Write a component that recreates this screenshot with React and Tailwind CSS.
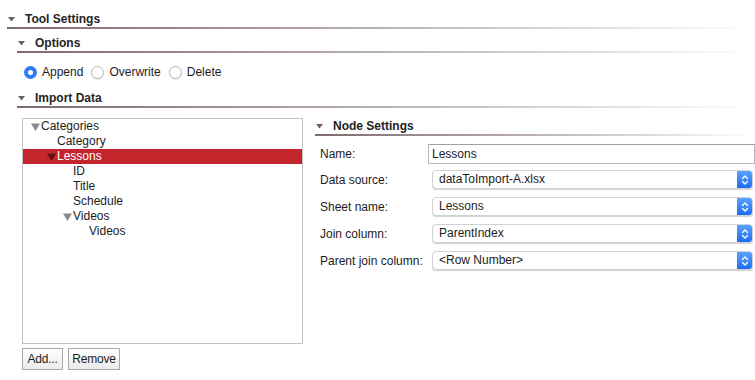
import React from "react";

const Caret = ({ className = "" }) => (
  <svg width="7" height="5" viewBox="0 0 7 5" className={className}>
    <path d="M0 0 L7 0 L3.5 4.5 Z" fill="currentColor" />
  </svg>
);

const TreeCaret = ({ selected }) => (
  <svg width="9" height="8" viewBox="0 0 9 8" className="shrink-0">
    <path d="M0 0.5 L9 0.5 L4.5 8 Z" fill={selected ? "#5c1114" : "#8a8a8a"} />
  </svg>
);

const SectionHeader = ({ title, indent, className = "" }) => (
  <div className={className}>
    <div className="flex items-center h-[15px]" style={{ paddingLeft: indent }}>
      <Caret className="text-[#6f5f5f]" />
      <span className="ml-[10px] font-bold text-[#242424]">{title}</span>
    </div>
    <div
      className="h-[2px] bg-gradient-to-r from-[#7d6b6b] to-white"
      style={{ marginLeft: indent - 1 }}
    />
  </div>
);

const Radio = ({ checked, label }) => (
  <label className="flex items-center gap-[5px]">
    {checked ? (
      <span className="w-[13px] h-[13px] rounded-full bg-[#2f7df6] flex items-center justify-center">
        <span className="w-[5px] h-[5px] rounded-full bg-white" />
      </span>
    ) : (
      <span className="w-[13px] h-[13px] rounded-full bg-white border border-[#b4b4b4] shadow-[0_1px_1px_rgba(0,0,0,0.08)]" />
    )}
    <span>{label}</span>
  </label>
);

const tree = [
  { label: "Categories", level: 0, open: true },
  { label: "Category", level: 1 },
  { label: "Lessons", level: 1, open: true, selected: true },
  { label: "ID", level: 2 },
  { label: "Title", level: 2 },
  { label: "Schedule", level: 2 },
  { label: "Videos", level: 2, open: true },
  { label: "Videos", level: 3 },
];

const Select = ({ value }) => (
  <div className="ml-[4px] mr-[2px] h-[19px] flex rounded-[4px] bg-white border border-[#d2d2d2] shadow-[0_1px_1px_rgba(0,0,0,0.18)] overflow-hidden">
    <div className="flex-1 flex items-center pl-[6px] text-[#1c1c1c]">{value}</div>
    <div className="w-[15px] bg-gradient-to-b from-[#5aa2ff] to-[#1b6cf3] flex items-center justify-center">
      <svg width="8" height="12" viewBox="0 0 8 12">
        <path d="M1.5 4.5 L4 2 L6.5 4.5 M1.5 7.5 L4 10 L6.5 7.5" stroke="white" strokeWidth="1.4" fill="none" strokeLinecap="round" strokeLinejoin="round" />
      </svg>
    </div>
  </div>
);

const fields = [
  { label: "Data source:", value: "dataToImport-A.xlsx" },
  { label: "Sheet name:", value: "Lessons" },
  { label: "Join column:", value: "ParentIndex" },
  { label: "Parent join column:", value: "<Row Number>" },
];

export default function App() {
  return (
    <div className="w-[755px] h-[380px] bg-white overflow-hidden font-['Liberation_Sans',Arial,sans-serif] text-[12px] leading-[15px] text-[#1c1c1c]">
      <SectionHeader title="Tool Settings" indent={8} className="pt-[12px]" />
      <SectionHeader title="Options" indent={18} className="mt-[7px]" />

      <div className="flex items-center gap-[8px] pl-[24px] mt-[12px] h-[14px]">
        <Radio checked label="Append" />
        <Radio label="Overwrite" />
        <Radio label="Delete" />
      </div>

      <SectionHeader title="Import Data" indent={18} className="mt-[12px]" />

      <div className="flex mt-[10px]">
        <div className="ml-[22px] w-[281px]">
          <div className="h-[226px] border border-[#c2c2c2] bg-white">
            {tree.map((n, i) => (
              <div
                key={i}
                className={`h-[15px] flex items-center ${n.selected ? "bg-[#c4242b] text-white" : ""}`}
                style={{ paddingLeft: 8 + n.level * 16 }}
              >
                <span className="w-[10px] flex items-center">
                  {n.open && <TreeCaret selected={n.selected} />}
                </span>
                <span>{n.label}</span>
              </div>
            ))}
          </div>
          <div className="flex gap-[5px] mt-[4px]">
            <button className="w-[41px] h-[22px] border border-[#a9a9a9] bg-gradient-to-b from-white to-[#ebebeb] text-[#1c1c1c] tracking-[-0.2px]">
              Add...
            </button>
            <button className="w-[52px] h-[22px] border border-[#a9a9a9] bg-gradient-to-b from-white to-[#ebebeb] text-[#1c1c1c] tracking-[-0.2px]">
              Remove
            </button>
          </div>
        </div>

        <div className="flex-1 ml-[10px]">
          <SectionHeader title="Node Settings" indent={3} className="mt-[1px]" />
          <div className="grid grid-cols-[108px_1fr] gap-y-[8px] items-center pl-[7px] mt-[8px]">
            <span className="pt-[2px]">Name:</span>
            <div className="h-[20px] border border-[#b9b9b9] border-t-[#a0a0a0] bg-white flex items-center pl-[3px] mb-[-2px]">
              Lessons
            </div>
            {fields.map((f) => (
              <React.Fragment key={f.label}>
                <span className="pt-[2px]">{f.label}</span>
                <Select value={f.value} />
              </React.Fragment>
            ))}
          </div>
        </div>
      </div>
    </div>
  );
}
